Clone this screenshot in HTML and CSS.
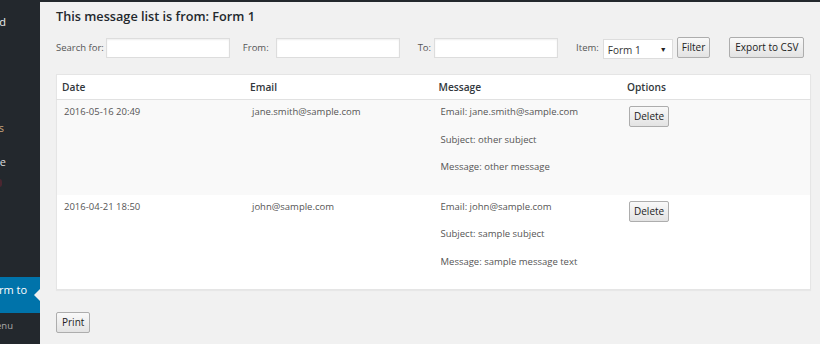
FILE: index.html
```html
<!DOCTYPE html>
<html>
<head>
<meta charset="utf-8">
<link rel="stylesheet" href="styles.css">
</head>
<body>
<div class="layout">
  <nav class="sidebar">
    <div class="mi mi-dash"><span>Dashboard</span></div>
    <div class="mi mi-posts"><span>Posts</span></div>
    <div class="mi mi-page"><span>Page</span></div>
    <div class="mi mi-bubble"><span class="bubble">1</span></div>
    <div class="mi mi-active"><span>Form to</span><span class="arrow"></span></div>
    <div class="mi mi-collapse"><span>Collapse menu</span></div>
  </nav>
  <main class="main">
    <h2 class="title">This message list is from: Form 1</h2>
    <form class="filters">
      <label class="lbl l-search">Search for:</label><input class="txt f-search" type="text">
      <label class="lbl l-from">From:</label><input class="txt f-from" type="text">
      <label class="lbl l-to">To:</label><input class="txt f-to" type="text">
      <label class="lbl l-item">Item:</label>
      <div class="select"><span>Form 1</span><span class="caret">▼</span></div>
      <button class="btn btn-filter" type="button">Filter</button>
      <button class="btn btn-export" type="button">Export to CSV</button>
    </form>
    <table class="list">
      <thead>
        <tr><th>Date</th><th>Email</th><th>Message</th><th>Options</th></tr>
      </thead>
      <tbody>
        <tr class="alt">
          <td>2016-05-16 20:49</td>
          <td>jane.smith@sample.com</td>
          <td><p>Email: jane.smith@sample.com</p><p>Subject: other subject</p><p>Message: other message</p></td>
          <td><button class="btn btn-del" type="button">Delete</button></td>
        </tr>
        <tr>
          <td>2016-04-21 18:50</td>
          <td>john@sample.com</td>
          <td><p>Email: john@sample.com</p><p>Subject: sample subject</p><p>Message: sample message text</p></td>
          <td><button class="btn btn-del" type="button">Delete</button></td>
        </tr>
      </tbody>
    </table>
    <div class="footer"><button class="btn btn-print" type="button">Print</button></div>
  </main>
</div>
</body>
</html>
```
FILE: styles.css
```css
html, body {
  margin: 0;
  padding: 0;
}
body {
  width: 820px;
  height: 344px;
  overflow: hidden;
  background: #f1f1f1;
  font-family: "Open Sans", "Noto Sans", sans-serif;
  color: #555;
}
.layout {
  display: flex;
  height: 344px;
}
.sidebar {
  width: 40px;
  flex: none;
  background: #23282d;
  overflow: hidden;
  display: flex;
  flex-direction: column;
  font-size: 11px;
  line-height: 18px;
  color: #eee;
}
.mi {
  display: flex;
  justify-content: flex-end;
  white-space: nowrap;
  position: relative;
  height: 18px;
}
.mi-dash { margin-top: 13px; padding-right: 34px; }
.mi-posts { margin-top: 88px; padding-right: 36px; color: #c9a67e; }
.mi-page { margin-top: 16px; padding-right: 34px; color: #ddd; }
.mi-bubble { margin-top: 8px; padding-right: 38px; height: 10px; }
.bubble {
  display: block;
  width: 14px;
  height: 8px;
  border-radius: 4px;
  background: #4a2630;
  color: transparent;
  font-size: 8px;
  line-height: 8px;
}
.mi-active {
  margin-top: 88px;
  height: 36px;
  padding-top: 4px;
  box-sizing: border-box;
  padding-right: 13px;
  background: #0073aa;
  color: #fff;
  align-items: flex-start;
}
.arrow {
  position: absolute;
  right: 0;
  top: 12px;
  width: 0;
  height: 0;
  border-top: 6px solid transparent;
  border-bottom: 6px solid transparent;
  border-right: 6px solid #f1f1f1;
}
.mi-collapse {
  margin-top: 4px;
  padding-right: 27px;
  color: #aaa;
  font-size: 9.5px;
}

.main {
  flex: 1;
  border-top: 2px solid #23282d;
  padding: 4px 9px 0 16px;
  min-width: 0;
}
.title {
  margin: 0;
  font-size: 12.7px;
  line-height: 20px;
  font-weight: 600;
  color: #23282d;
}
.filters {
  display: flex;
  align-items: center;
  margin: 11px 0 0;
  height: 21px;
  font-size: 9.5px;
  white-space: nowrap;
}
.lbl {
  flex: none;
  color: #555;
}
.l-search { margin-right: 2px; }
.l-from { margin-right: 7px; }
.l-to { margin-right: 3px; }
.l-item { margin-right: 4px; }
.txt {
  flex: none;
  width: 124px;
  height: 20px;
  box-sizing: border-box;
  border: 1px solid #ddd;
  box-shadow: inset 0 1px 2px rgba(0, 0, 0, .07);
  background: #fff;
  margin: 0;
  padding: 0 4px;
}
.f-search { margin-right: 13px; }
.f-from { margin-right: 18px; }
.f-to { margin-right: 18px; }
.select {
  flex: none;
  width: 70px;
  height: 20px;
  box-sizing: border-box;
  border: 1px solid #ddd;
  background: #fff;
  display: flex;
  align-items: center;
  justify-content: space-between;
  padding: 2px 5px 0 4px;
  margin-top: 2px;
  font-size: 10px;
  color: #333;
  margin-right: 4px;
}
.caret {
  font-size: 7px;
  color: #222;
  margin-top: -1px;
}
.btn {
  flex: none;
  font-family: "Open Sans", "Noto Sans", sans-serif;
  font-size: 10px;
  line-height: 15px;
  height: 21px;
  box-sizing: border-box;
  padding: 2px 5px;
  margin: 0;
  color: #222;
  border: 1px solid #adadad;
  border-radius: 2px;
  background: linear-gradient(#f9f9f9, #e3e3e3);
  white-space: nowrap;
}
.btn-filter { margin-right: 19px; margin-top: -1px; padding: 2px 4px; }
.btn-export { margin-top: -1px; }

.list {
  margin-top: 16px;
  width: 755px;
  table-layout: fixed;
  border-collapse: collapse;
  background: #fff;
  border: 1px solid #e5e5e5;
  box-shadow: 0 1px 1px rgba(0, 0, 0, .04);
  font-size: 9.5px;
}
.list th {
  text-align: left;
  font-weight: 600;
  font-size: 10.2px;
  line-height: 18px;
  color: #32373c;
  padding: 3px 5px 3px;
  border-bottom: 1px solid #e1e1e1;
}
.list td {
  vertical-align: top;
  padding: 4px 7px 8px;
  line-height: 16.5px;
}
.list tr.alt td {
  background: #f9f9f9;
}
.list p {
  margin: 0 0 11px;
}
.btn-del {
  display: block;
  margin-top: 2px;
  padding: 2px 4px;
}
.footer {
  display: flex;
  margin-top: 22px;
}
```
